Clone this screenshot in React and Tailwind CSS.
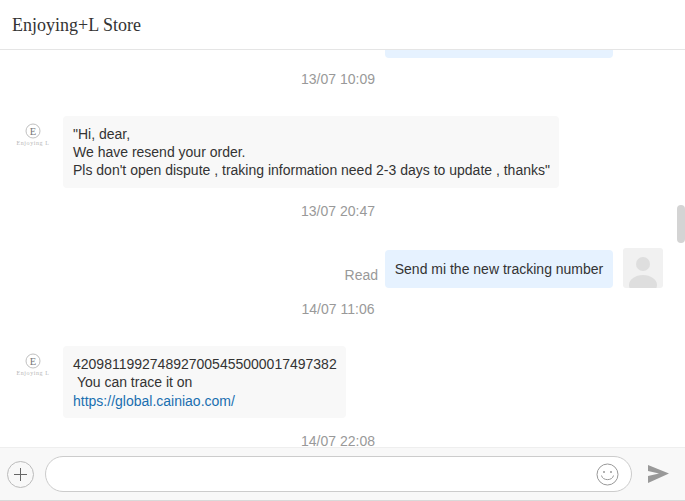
const sans = 'font-["Liberation_Sans",Arial,sans-serif]';

function TimeLabel({ children, className = '' }) {
    return <div className={`text-center text-sm leading-[18px] text-[#999999] ${className}`}>{children}</div>;
}

function StoreAvatar() {
    return (
        <div className="w-10 h-10 shrink-0 mt-[3px] overflow-hidden flex flex-col items-center bg-white">
            <svg width="16" height="16" viewBox="0 0 16 16" className="mt-1">
                <circle cx="8" cy="8" r="7" fill="none" stroke="#b0b0b0" strokeWidth="0.8" />
                <text x="8" y="11.5" textAnchor="middle" fontSize="10.5" fontFamily="Liberation Serif, serif" fill="#777777">E</text>
            </svg>
            <span className="text-[6px] leading-[7px] mt-[1px] whitespace-nowrap text-[#b8b8b8] font-['Liberation_Serif',serif] tracking-[0.6px]">Enjoying L</span>
        </div>
    );
}

function UserAvatar() {
    return (
        <div className="w-10 h-10 shrink-0 rounded-[3px] bg-[#f1f1f1] overflow-hidden">
            <svg width="40" height="40" viewBox="0 0 40 40">
                <circle cx="20" cy="16" r="7" fill="#dedede" />
                <ellipse cx="20" cy="37" rx="14" ry="10" fill="#dedede" />
            </svg>
        </div>
    );
}

function StoreMessage({ children }) {
    return (
        <div className="flex items-start pl-[13px] gap-[10px]">
            <StoreAvatar />
            <div className="bg-[#f8f8f8] rounded-[4px] pl-[10px] pr-[9px] py-[8.5px] text-sm leading-[18.4px] text-[#333333]">
                {children}
            </div>
        </div>
    );
}

export default function App() {
    return (
        <div className={`${sans} w-[685px] h-[501px] bg-white flex flex-col overflow-hidden relative`}>
            <header className="h-[50px] shrink-0 border-b border-[#e5e5e5] pl-3 pt-[1px] flex items-center font-['Liberation_Serif',serif] text-lg text-[#333333]">
                Enjoying+L Store
            </header>

            <main className="flex-1 min-h-0 overflow-hidden w-[676px]">
                <div className="h-2 w-[228px] ml-[385px] bg-[#e6f2ff] rounded-b-[4px]" />
                <TimeLabel className="mt-3">13/07 10:09</TimeLabel>

                <div className="mt-[28px]">
                    <StoreMessage>
                        "Hi, dear,
                        <br />
                        We have resend your order.
                        <br />
                        Pls don't open dispute , traking information need 2-3 days to update , thanks"
                    </StoreMessage>
                </div>
                <TimeLabel className="mt-[14px]">13/07 20:47</TimeLabel>

                <div className="mt-[28px] flex justify-end items-start pr-[13px] gap-[10px]">
                    <div className="flex items-end gap-[7px] mt-[2px]">
                        <span className="text-sm leading-[18px] text-[#999999] pb-1">Read</span>
                        <div className="bg-[#e6f2ff] rounded-[4px] w-[228px] h-[38px] flex items-center justify-center text-sm text-[#333333]">
                            Send mi the new tracking number
                        </div>
                    </div>
                    <UserAvatar />
                </div>
                <TimeLabel className="mt-[12px]">14/07 11:06</TimeLabel>

                <div className="mt-[28px]">
                    <StoreMessage>
                        4209811992748927005455000017497382
                        <br />
                        &nbsp;You can trace it on
                        <br />
                        <a href="#" className="text-[#1a6fb0]">https://global.cainiao.com/</a>
                    </StoreMessage>
                </div>
                <TimeLabel className="mt-[14px]">14/07 22:08</TimeLabel>
            </main>

            <div className="absolute right-0 top-[205px] w-2 h-[38px] rounded-[4px] bg-[#d4d4d4]" />

            <footer className="h-[53px] shrink-0 mb-[1px] bg-[#f8f8f8] border-t border-[#eeeeee] flex items-center">
                <button className="ml-[7px] w-[27px] h-[27px] rounded-full border border-[#bbbbbb] flex items-center justify-center">
                    <svg width="13" height="13" viewBox="0 0 13 13">
                        <path d="M6.5 0V13M0 6.5H13" stroke="#666666" strokeWidth="1" />
                    </svg>
                </button>
                <div className="ml-[11px] w-[587px] h-9 rounded-full border border-[#cccccc] bg-white flex items-center justify-end pr-[12px]">
                    <svg width="23" height="23" viewBox="0 0 23 23">
                        <circle cx="11.5" cy="11.5" r="10.5" fill="none" stroke="#999999" strokeWidth="1" />
                        <circle cx="8" cy="9" r="1" fill="#999999" />
                        <circle cx="15" cy="9" r="1" fill="#999999" />
                        <path d="M5.5 12.5C6.5 18 16.5 18 17.5 12.5" fill="none" stroke="#999999" strokeWidth="1" />
                    </svg>
                </div>
                <svg width="21" height="18" viewBox="0 0 21 18" className="ml-[16px]">
                    <path d="M0 0L21 8.5L0 18L0 11L11 8.5L0 6Z" fill="#999999" />
                </svg>
            </footer>
            <div className="absolute left-0 right-0 bottom-0 h-px bg-[#d9d9d9]" />
        </div>
    );
}
